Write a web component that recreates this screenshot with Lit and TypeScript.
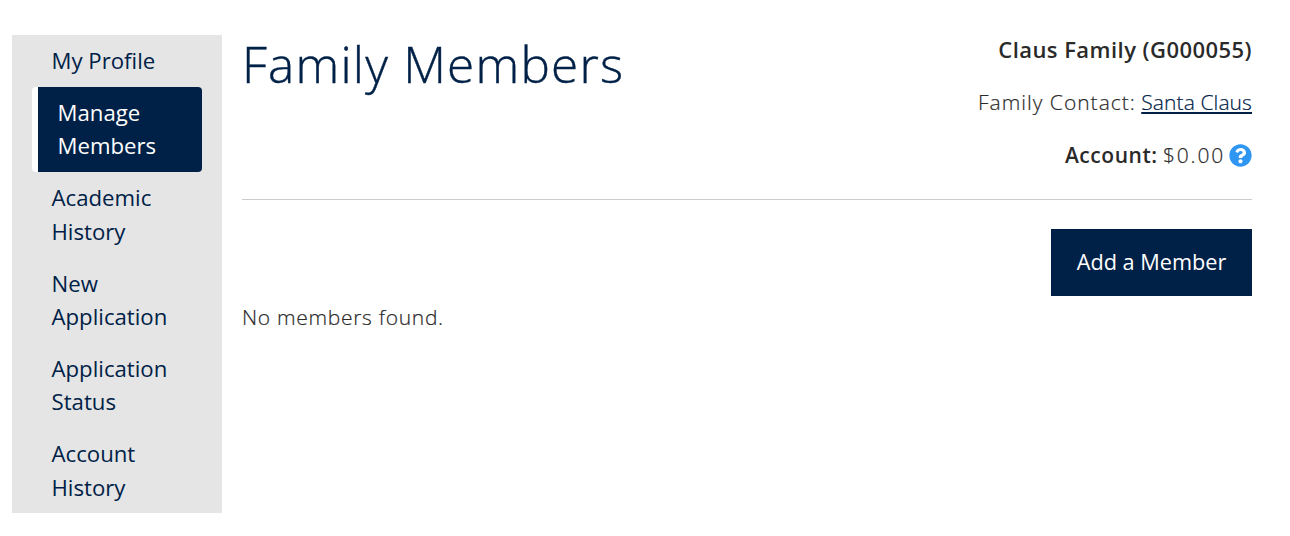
import { LitElement, html, css } from "lit";
import { customElement } from "lit/decorators.js";

@customElement("app-root")
export class AppRoot extends LitElement {
  static styles = css`
    :host { display: block; width: 1290px; height: 536px; background: #fff; font-family: "Open Sans", sans-serif; font-weight: 300; color: #2a2a2a; overflow: hidden; }
    .page { display: flex; padding: 35px 38px 0 12px; align-items: flex-start; }
    .side { width: 210px; height: 478px; flex: none; background: #e5e5e5; font-weight: 400; font-size: 22.2px; line-height: 33.5px; color: #002147; overflow: hidden; }
    .item { padding: 9.42px 30px 8.91px 39.5px; }
    .active { margin: 0 20px; border-left: 6px solid #fff; border-radius: 4px; background: #002147; color: #fff; padding: 9px 10px 9px 19.5px; }
    .main { flex: 1; margin-left: 20px; min-width: 0; }
    .head { display: flex; justify-content: space-between; height: 164px; border-bottom: 1px solid #ccc; }
    h1 { margin: 0; font-size: 49.5px; line-height: 58px; font-weight: 300; color: #002147; letter-spacing: 1.2px; -webkit-text-stroke: 0.4px #002147; }
    .info { text-align: right; font-size: 21px; line-height: 30px; -webkit-text-stroke: 0.2px #2a2a2a; }
    .info p { margin: 0 0 22.5px; }
    .info p:first-child { line-height: 28px; }
    .info p:nth-child(2) { margin-bottom: 23.5px; }
    .lbl { letter-spacing: 1px; }
    b { font-weight: 600; letter-spacing: 0.55px; -webkit-text-stroke: 0; }
    .info p:first-child b { font-size: 22px; letter-spacing: 0.45px; }
    .amt { letter-spacing: 1.8px; }
    a { color: #002147; text-decoration: underline; letter-spacing: 0.1px; -webkit-text-stroke: 0.2px #002147; }
    .acct { display: flex; align-items: center; justify-content: flex-end; gap: 4px; }
    .bar { display: flex; justify-content: flex-end; margin-top: 29px; }
    .btn { background: #002147; color: #fff; font-size: 21.7px; font-weight: 400; height: 67px; width: 201px; display: flex; align-items: center; justify-content: center; padding-bottom: 3px; box-sizing: border-box; }
    .none { font-size: 21px; margin-top: 6px; line-height: 30px; letter-spacing: 0.7px; -webkit-text-stroke: 0.2px #2a2a2a; }
    svg { display: block; }
  `;
  render() {
    const items = ["My Profile", "Manage Members", "Academic History", "New Application", "Application Status", "Account History"];
    return html`<div class="page">
      <nav class="side">${items.map((t) => html`<div class="${t === "Manage Members" ? "active" : "item"}">${t}</div>`)}</nav>
      <main class="main">
        <div class="head">
          <h1>Family Members</h1>
          <div class="info">
            <p><b>Claus Family (G000055)</b></p>
            <p><span class="lbl">Family Contact:</span> <a href="#">Santa Claus</a></p>
            <p class="acct"><span><b>Account:</b> <span class="amt">$0.00</span></span>
              <svg width="23" height="23" viewBox="0 0 512 512"><path fill="#2f96f3" d="M504 256c0 136.997-111.043 248-248 248S8 392.997 8 256C8 119.083 119.043 8 256 8s248 111.083 248 248zM262.655 90c-54.497 0-89.255 22.957-116.549 63.758-3.536 5.286-2.353 12.415 2.715 16.258l34.699 26.31c5.205 3.947 12.621 3.008 16.665-2.122 17.864-22.658 30.113-35.797 57.303-35.797 20.429 0 45.698 13.148 45.698 32.958 0 14.976-12.363 22.667-32.534 33.976C247.128 238.528 216 254.941 216 296v4c0 6.627 5.373 12 12 12h56c6.627 0 12-5.373 12-12v-1.333c0-28.462 83.186-29.647 83.186-106.667 0-58.002-60.165-102-116.531-102zM256 338c-25.365 0-46 20.635-46 46 0 25.364 20.635 46 46 46s46-20.636 46-46c0-25.365-20.635-46-46-46z"/></svg></p>
          </div>
        </div>
        <div class="bar"><div class="btn">Add a Member</div></div>
        <div class="none">No members found.</div>
      </main>
    </div>`;
  }
}
